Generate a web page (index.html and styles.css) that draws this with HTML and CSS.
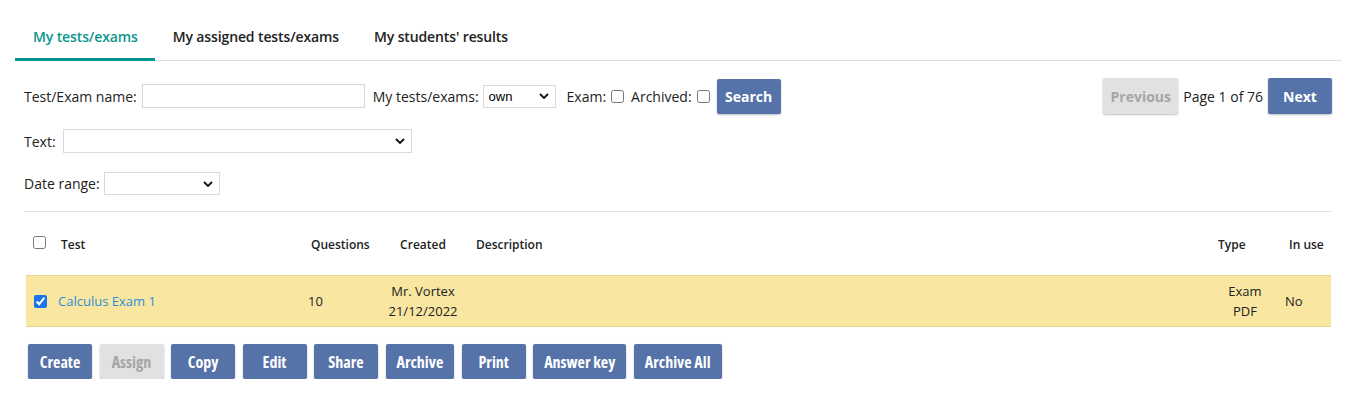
FILE: index.html
```html
<!DOCTYPE html>
<html>
<head>
<meta charset="utf-8">
<link rel="stylesheet" href="styles.css">
</head>
<body>
<div class="tabs">
  <div class="tab active">My tests/exams</div>
  <div class="tab">My assigned tests/exams</div>
  <div class="tab">My students' results</div>
</div>
<div class="content">
  <div class="filter-row first">
    <label class="lbl">Test/Exam name:</label>
    <input class="txt name" type="text">
    <label class="lbl ml">My tests/exams:</label>
    <select class="sel own"><option>own</option></select>
    <label class="lbl ml2 cbl">Exam:</label>
    <input class="cb" type="checkbox">
    <label class="lbl ml3 cbl">Archived:</label>
    <input class="cb" type="checkbox">
    <button class="btn search">Search</button>
    <div class="pager">
      <button class="btn disabled prev">Previous</button>
      <span class="page">Page 1 of 76</span>
      <button class="btn next">Next</button>
    </div>
  </div>
  <div class="filter-row second">
    <label class="lbl">Text:</label>
    <select class="sel text"><option></option></select>
  </div>
  <div class="filter-row third">
    <label class="lbl">Date range:</label>
    <select class="sel date"><option></option></select>
  </div>
  <div class="hr"></div>
  <table class="grid">
    <colgroup>
      <col class="c1"><col class="c2"><col class="c3"><col class="c4"><col class="c5"><col class="c6"><col class="c7">
    </colgroup>
    <thead>
      <tr>
        <th class="h-cb"><input class="cb" type="checkbox"></th>
        <th class="h-test">Test</th>
        <th class="h-q">Questions</th>
        <th class="h-created">Created</th>
        <th class="h-desc">Description</th>
        <th class="h-type">Type</th>
        <th class="h-use">In use</th>
      </tr>
    </thead>
    <tbody>
      <tr class="selected">
        <td class="d-cb"><input class="cb" type="checkbox" checked></td>
        <td class="d-test"><a href="#" class="link">Calculus Exam 1</a></td>
        <td class="d-q">10</td>
        <td class="d-created">Mr. Vortex<br>21/12/2022</td>
        <td class="d-desc"></td>
        <td class="d-type">Exam<br>PDF</td>
        <td class="d-use">No</td>
      </tr>
    </tbody>
  </table>
  <div class="actions">
    <button class="btn">Create</button>
    <button class="btn disabled">Assign</button>
    <button class="btn">Copy</button>
    <button class="btn">Edit</button>
    <button class="btn">Share</button>
    <button class="btn">Archive</button>
    <button class="btn">Print</button>
    <button class="btn">Answer key</button>
    <button class="btn">Archive All</button>
  </div>
</div>
</body>
</html>
```
FILE: styles.css
```css
html, body {
  margin: 0;
  padding: 0;
  background: #fff;
}
body {
  font-family: "Open Sans", "Liberation Sans", sans-serif;
  font-size: 14px;
  color: #222;
}
.tabs {
  display: flex;
  margin: 17px 14px 0 15px;
  border-bottom: 1px solid #dcdcdc;
}
.tab {
  padding: 10px 17px 11px 18px;
  line-height: 20px;
  font-size: 14px;
  font-weight: 600;
  letter-spacing: -0.12px;
  color: #222;
  border-bottom: 3px solid transparent;
  margin-bottom: -1px;
}
.tab.active {
  color: #0a968e;
  border-bottom-color: #00968f;
}
.content {
  padding: 16px 24px 0 24px;
}
.filter-row {
  display: flex;
  align-items: center;
}
.filter-row.first {
  height: 36px;
  margin-top: 1px;
}
.filter-row.second {
  margin-top: 15px;
  height: 24px;
}
.filter-row.third {
  margin-top: 19px;
  height: 23px;
}
.lbl {
  margin-right: 4px;
  white-space: nowrap;
}
.lbl.cbl { margin-right: 5px; }
.lbl.ml { margin-left: 8px; }
.lbl.ml2 { margin-left: 11px; }
.lbl.ml3 { margin-left: 7px; }
.txt {
  box-sizing: border-box;
  height: 24px;
  border: 1px solid #d8d8d8;
  padding: 2px 4px;
  font: inherit;
  outline: none;
}
.txt.name { width: 223px; margin-left: 1px; }
.sel {
  -webkit-appearance: none;
  appearance: none;
  box-sizing: border-box;
  height: 23px;
  border: 1px solid #dadada;
  border-radius: 0;
  background-color: #fff;
  background-image: url("data:image/svg+xml;utf8,<svg xmlns='http://www.w3.org/2000/svg' width='10' height='6' viewBox='0 0 10 6'><path d='M1 1l4 4 4-4' fill='none' stroke='%23111' stroke-width='1.8'/></svg>");
  background-repeat: no-repeat;
  background-position: right 6px center;
  font-family: "Liberation Sans", Arial, sans-serif;
  font-size: 13px;
  color: #000;
  padding: 0 20px 0 5px;
}
.sel.own { width: 73px; }
.sel.text { width: 349px; height: 24px; margin-left: 3px; }
.sel.date { width: 116px; }
.cb {
  width: 13px;
  height: 13px;
  margin: 0;
  accent-color: #1a73e8;
}
.btn {
  box-sizing: border-box;
  height: 35px;
  min-width: 64px;
  padding: 0 11px;
  border: none;
  border-radius: 2px;
  background: #5572a9;
  color: #fff;
  font-family: "Open Sans", "DejaVu Sans Condensed", sans-serif;
  font-stretch: 75%;
  font-weight: 700;
  font-size: 16px;
  box-shadow: 0 1px 2px rgba(0,0,0,0.25);
  cursor: pointer;
}
.btn.disabled {
  background: #e1e1e1;
  color: #a5a5a5;
}
.btn.search {
  margin-left: 7px;
  font-stretch: 100%;
  font-size: 14px;
  padding: 0 8px;
}
.pager {
  margin-left: auto;
  display: flex;
  align-items: center;
}
.pager .btn {
  font-stretch: 100%;
  font-size: 14px;
  height: 36px;
}
.btn.prev { width: 75px; padding: 0; }
.btn.next { width: 64px; padding: 0; }
.page {
  font-size: 14px;
  margin: 0 5px 0 5px;
}
.hr {
  margin-top: 16px;
  height: 1px;
  background: #e2e2e2;
}
.grid {
  margin-left: 2px;
  width: 1305px;
  border-collapse: collapse;
  table-layout: fixed;
}
.c1 { width: 27px; }
.c2 { width: 247px; }
.c3 { width: 84px; }
.c4 { width: 78px; }
.c5 { width: 748px; }
.c6 { width: 70px; }
.c7 { width: 51px; }
.grid th {
  height: 61px;
  padding: 1px 8px 0 8px;
  font-size: 12px;
  font-weight: 600;
  text-align: left;
  vertical-align: middle;
  color: #222;
}
.grid th.h-cb { padding: 2px 0 0 7px; }
.grid th.h-test { padding-left: 8px; }
.grid th.h-q { padding-left: 11px; }
.grid th.h-created { text-align: center; padding: 1px 0 0 0; }
.grid th.h-desc { padding-left: 14px; }
.grid th.h-type { padding-left: 8px; }
.grid th.h-use { padding-left: 9px; padding-right: 0; white-space: nowrap; }
.grid tr.selected td {
  background: #f8e6a1;
  border-top: 1px solid #e9d68c;
  border-bottom: 1px solid #e9d68c;
  height: 50px;
  padding: 0;
  font-size: 13px;
  line-height: 20px;
  vertical-align: middle;
}
.grid td.d-cb { padding-left: 8px !important; }
.grid td.d-cb .cb { vertical-align: middle; position: relative; top: -1px; }
.grid td.d-test { padding-left: 5px !important; }
.grid td.d-q { padding-left: 8px !important; }
.grid td.d-created { text-align: center; }
.grid td.d-type { text-align: center; }
.grid td.d-use { padding-left: 5px !important; }
.link {
  color: #2e8fd6;
  text-decoration: none;
}
.actions {
  display: flex;
  gap: 7.5px;
  margin: 17px 0 0 4px;
}
```
